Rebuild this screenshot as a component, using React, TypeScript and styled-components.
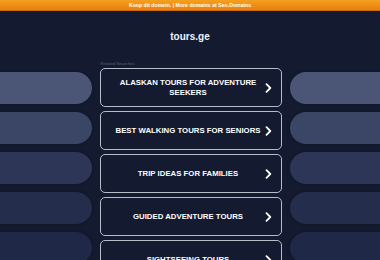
import styled, { createGlobalStyle } from "styled-components";

const GlobalStyle = createGlobalStyle`
  html, body {
    margin: 0;
    padding: 0;
    background: #141a2f;
    overflow: hidden;
  }
  body {
    font-family: "Liberation Sans", Arial, sans-serif;
  }
`;

const Page = styled.div`
  width: 380px;
  height: 260px;
  overflow: hidden;
  background: #141a2f;
`;

const TopBar = styled.div`
  height: 11px;
  display: flex;
  align-items: center;
  justify-content: center;
  background: linear-gradient(#f5a01e, #e8800f);
  border-bottom: 1px solid #c9690c;
  box-sizing: border-box;
  color: #ffffff;
  font-size: 5.2px;
  font-weight: 700;
  white-space: nowrap;
`;

const Title = styled.h1`
  margin: 0;
  height: 47px;
  display: flex;
  align-items: center;
  justify-content: center;
  padding-top: 4px;
  box-sizing: border-box;
  color: #f2f3f7;
  font-size: 10px;
  font-weight: 700;
`;

const Columns = styled.div`
  display: grid;
  grid-template-columns: 1fr 182px 1fr;
  column-gap: 8px;
  padding-left: 1px;
`;

const Side = styled.div<{ $side: "left" | "right" }>`
  display: flex;
  flex-direction: column;
  gap: 8px;
  padding-top: 14px;
  margin-left: ${(p) => (p.$side === "left" ? "-30px" : "0")};
  margin-right: ${(p) => (p.$side === "right" ? "-30px" : "0")};
`;

const Pill = styled.div<{ $shade: string }>`
  height: 32px;
  border-radius: 16px;
  background: ${(p) => p.$shade};
  box-shadow: 0 0 3px rgba(0, 0, 0, 0.25);
`;

const Center = styled.div`
  display: flex;
  flex-direction: column;
`;

const Label = styled.div`
  height: 10px;
  display: flex;
  align-items: center;
  padding-left: 1px;
  color: #5c637a;
  font-size: 4.3px;
`;

const List = styled.div`
  display: flex;
  flex-direction: column;
  gap: 4px;
`;

const LinkButton = styled.div`
  height: 39px;
  flex-shrink: 0;
  box-sizing: border-box;
  display: flex;
  align-items: center;
  padding: 0 8px 0 12px;
  border: 1.5px solid #b8bcc8;
  border-radius: 5px;
  background: #141a2f;
  color: #ffffff;
`;

const LinkText = styled.span`
  flex: 1;
  text-align: center;
  font-size: 7.8px;
  font-weight: 700;
  line-height: 10px;
  text-transform: uppercase;
  padding: 0 2px;
`;

const Chevron = () => (
  <svg width="9" height="10" viewBox="0 0 9 10" style={{ flexShrink: 0 }}>
    <polyline
      points="2.5,1.2 6.3,5 2.5,8.8"
      fill="none"
      stroke="#ffffff"
      strokeWidth="1.8"
      strokeLinecap="round"
      strokeLinejoin="round"
    />
  </svg>
);

const searches = [
  "Alaskan Tours for Adventure Seekers",
  "Best Walking Tours for Seniors",
  "Trip Ideas for Families",
  "Guided Adventure Tours",
  "Sightseeing Tours",
];

const shades = ["#4b5576", "#3b4566", "#2d3656", "#242d4b", "#1f2846"];

export default function App() {
  return (
    <Page>
      <GlobalStyle />
      <TopBar>Koop dit domein. | More domains at Seo.Domains</TopBar>
      <Title>tours.ge</Title>
      <Columns>
        <Side $side="left">
          {shades.map((s) => (
            <Pill key={s} $shade={s} />
          ))}
        </Side>
        <Center>
          <Label>Related Searches</Label>
          <List>
            {searches.map((q) => (
              <LinkButton key={q}>
                <LinkText>{q}</LinkText>
                <Chevron />
              </LinkButton>
            ))}
          </List>
        </Center>
        <Side $side="right">
          {shades.map((s) => (
            <Pill key={s} $shade={s} />
          ))}
        </Side>
      </Columns>
    </Page>
  );
}
